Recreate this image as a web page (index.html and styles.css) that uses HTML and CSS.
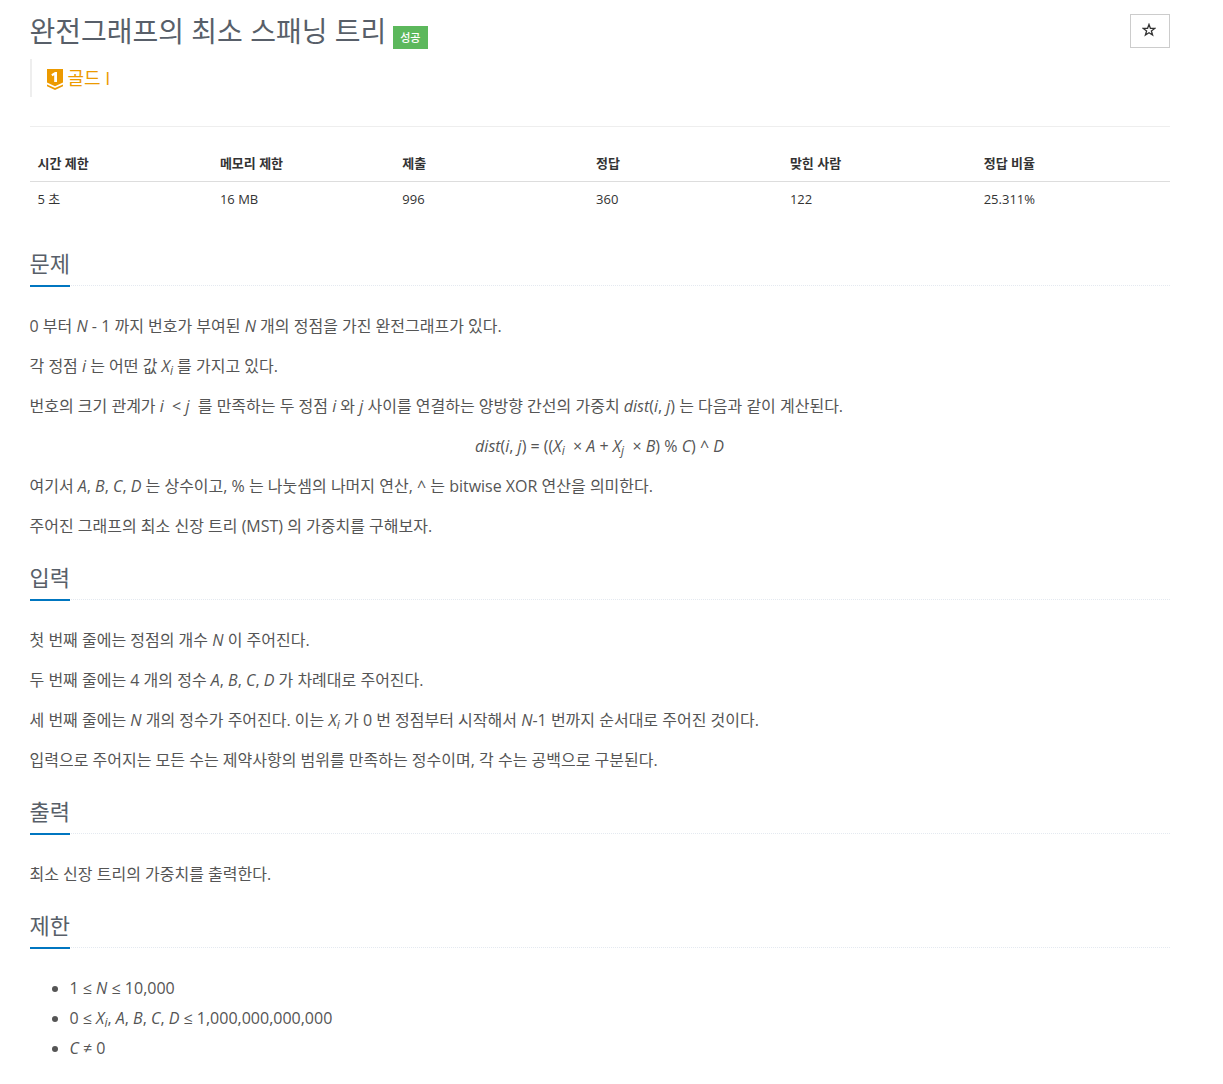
FILE: index.html
```html
<!DOCTYPE html>
<html lang="ko">
<head>
<meta charset="utf-8">
<title>완전그래프의 최소 스패닝 트리</title>
<link rel="stylesheet" href="styles.css">
</head>
<body>
<main class="page">
<header class="title-bar">
<h1 class="title"><span class="name">완전그래프의 최소 스패닝 트리</span><span class="label">성공</span></h1>
<button class="star" aria-label="즐겨찾기"><svg width="14" height="14" viewBox="0 0 14 14"><path d="M7 1.4 8.4 5.3 12.8 5.4 9.4 8 10.6 12.1 7 9.8 3.4 12.1 4.6 8 1.2 5.4 5.6 5.3Z" fill="none" stroke="#333" stroke-width="1.3"/></svg></button>
</header>
<blockquote class="tier"><svg class="badge" width="16" height="21" viewBox="0 0 16 21"><path d="M0 0H16V13.6L8 17.2 0 13.6Z" fill="#ec9a00"/><path d="M0 15.4 8 19 16 15.4V17.3L8 21 0 17.3Z" fill="#ec9a00"/><path d="M4.3 5.2 8 3H10V13H7.2V6.3L5.4 7.3Z" fill="#fff"/></svg><span class="tier-name">골드 I</span></blockquote>
<hr class="rule">
<table class="info">
<thead><tr><th class="w16">시간 제한</th><th class="w16">메모리 제한</th><th>제출</th><th>정답</th><th>맞힌 사람</th><th>정답 비율</th></tr></thead>
<tbody><tr><td>5 초</td><td>16 MB</td><td>996</td><td>360</td><td>122</td><td>25.311%</td></tr></tbody>
</table>
<section class="section">
<div class="headline"><h2>문제</h2></div>
<p>0 부터 <em>N</em> - 1 까지 번호가 부여된 <em>N</em> 개의 정점을 가진 완전그래프가 있다.</p>
<p>각 정점 <em>i</em> 는 어떤 값 <em>X<sub>i</sub></em> 를 가지고 있다.</p>
<p>번호의 크기 관계가 <em>i</em> &nbsp;&lt; <em>j</em> &nbsp;를 만족하는 두 정점 <em>i</em> 와 <em>j</em> 사이를 연결하는 양방향 간선의 가중치 <em>dist</em>(<em>i</em>, <em>j</em>) 는 다음과 같이 계산된다.</p>
<p class="formula"><em>dist</em>(<em>i</em>, <em>j</em>) = ((<em>X<sub>i</sub></em> &nbsp;× <em>A</em> + <em>X<sub>j</sub></em> &nbsp;× <em>B</em>) % <em>C</em>) ^ <em>D</em></p>
<p>여기서 <em>A</em>, <em>B</em>, <em>C</em>, <em>D</em> 는 상수이고, % 는 나눗셈의 나머지 연산, ^ 는 bitwise XOR 연산을 의미한다.</p>
<p>주어진 그래프의 최소 신장 트리 (MST) 의 가중치를 구해보자.</p>
</section>
<section class="section">
<div class="headline"><h2>입력</h2></div>
<p>첫 번째 줄에는 정점의 개수 <em>N</em> 이 주어진다.</p>
<p>두 번째 줄에는 4 개의 정수 <em>A</em>, <em>B</em>, <em>C</em>, <em>D</em> 가 차례대로 주어진다.</p>
<p>세 번째 줄에는 <em>N</em> 개의 정수가 주어진다. 이는 <em>X<sub>i</sub></em> 가 0 번 정점부터 시작해서 <em>N</em>-1 번까지 순서대로 주어진 것이다.</p>
<p>입력으로 주어지는 모든 수는 제약사항의 범위를 만족하는 정수이며, 각 수는 공백으로 구분된다.</p>
</section>
<section class="section">
<div class="headline"><h2>출력</h2></div>
<p>최소 신장 트리의 가중치를 출력한다.</p>
</section>
<section class="section">
<div class="headline"><h2>제한</h2></div>
<ul>
<li>1 ≤ <em>N</em> ≤ 10,000</li>
<li>0 ≤ <em>X<sub>i</sub></em>, <em>A</em>, <em>B</em>, <em>C</em>, <em>D</em> ≤ 1,000,000,000,000</li>
<li><em>C</em> ≠ 0</li>
</ul>
</section>
</main>
</body>
</html>
```
FILE: styles.css
```css
* { box-sizing: border-box; }
body { margin: 0; background: #fff; color: #333; font: 13px/20px "Open Sans", "Noto Sans CJK KR", sans-serif; }
.page { width: 1140px; margin-left: 29.5px; padding-top: 14px; }
.title-bar { display: flex; justify-content: space-between; height: 45px; }
.title { display: flex; margin: 0; font-size: 28px; line-height: 35px; font-weight: 400; color: #585f69; }
.label { width: 35px; height: 23px; margin: 12px 0 0 6.6px; background: #5cb85c; color: #fff; font-size: 11px; font-weight: 500; line-height: 23px; text-align: center; }
.star { display: flex; align-items: center; justify-content: center; width: 40px; height: 34px; padding: 0 2px 2px 0; border: 1px solid #ccc; background: #fff; }
.tier { display: flex; height: 38px; margin: 0; padding: 10px 0 0 15.5px; border-left: 2px solid #eee; }
.tier-name { margin-left: 4.5px; color: #ec9a00; font-size: 18px; line-height: 18px; }
.rule { height: 1px; margin: 29px 0 18px; border: 0; background: #eee; }
.info { width: 100%; table-layout: fixed; border-collapse: collapse; }
.info th, .info td { padding: 8px; text-align: left; height: 36px; line-height: 20px; }
.info th { padding: 8px 8px 7px; font-weight: 700; border-bottom: 1px solid #ddd; }
.info td { height: 34px; padding: 7px 8px; }
.w16 { width: 16%; }
.section { color: #555; font-size: 16px; line-height: 30px; }
.info + .section { margin-top: 31px; }
.section + .section { margin-top: 20px; }
.headline { height: 39px; margin-bottom: 25px; border-bottom: 1px dotted #e4e9f0; }
.headline h2 { width: max-content; height: 40px; margin: 0; border-bottom: 2px solid #0076c0; color: #585f69; font-size: 22px; line-height: 33px; font-weight: 400; }
.section p { height: 30px; margin: 0 0 10px; white-space: nowrap; }
.section .formula { text-align: center; }
sub { position: relative; bottom: -0.25em; font-size: 75%; line-height: 0; vertical-align: baseline; }
.section ul { margin: 0; padding-left: 40px; }
```
